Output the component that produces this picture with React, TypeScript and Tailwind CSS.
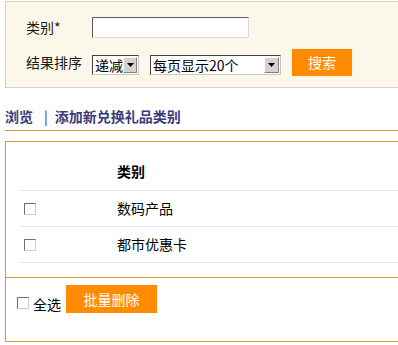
import React from 'react';

const FONT = "font-['Noto_Sans_CJK_SC','Noto_Sans',sans-serif]";

function CheckBox({ className = '' }: { className?: string }) {
  return (
    <span
      className={`block w-[12px] h-[12px] bg-white border border-t-[#6f6f6f] border-l-[#6f6f6f] border-b-[#cfcfcf] border-r-[#cfcfcf] ${className}`}
    />
  );
}

function FakeSelect({ width, value }: { width: string; value: string }) {
  return (
    <div
      className={`${width} h-[20px] flex items-center bg-white border border-t-[#404040] border-l-[#404040] border-b-[#c8c8c8] border-r-[#c8c8c8]`}
    >
      <span className="flex-1 pl-[2px] text-[14px] leading-[18px] text-black whitespace-nowrap">{value}</span>
      <span className="w-[15px] h-[16px] mr-px bg-[#d6d3ce] border border-t-white border-l-white border-b-[#808080] border-r-[#808080] flex items-center justify-center">
        <svg width="7" height="4" viewBox="0 0 7 4">
          <polygon points="0,0 7,0 3.5,4" fill="#000" />
        </svg>
      </span>
    </div>
  );
}

export default function App() {
  const rows = ['数码产品', '都市优惠卡'];
  return (
    <div className={`w-[398px] h-[345px] overflow-hidden bg-white ${FONT} text-[14px] text-[#1a1a1a]`}>
      <div className="pl-[5px] pt-px w-[520px]">
        {/* search panel */}
        <div className="bg-[#fcf8e9] border border-[#d2d2d2] pt-[15px] pb-[11px]">
          <div className="flex items-center h-[21px]">
            <span className="w-[86px] pl-[20px] leading-[21px]">类别*</span>
            <div className="w-[157px] h-[21px] bg-white border border-t-[#5a5a5a] border-l-[#5a5a5a] border-b-[#d8d8d8] border-r-[#d8d8d8]" />
          </div>
          <div className="flex items-start mt-[11px] h-[27px]">
            <span className="w-[86px] pl-[20px] leading-[27px]">结果排序</span>
            <div className="mt-[6px] flex gap-[11px]">
              <FakeSelect width="w-[47px]" value="递减" />
              <FakeSelect width="w-[131px]" value="每页显示20个" />
            </div>
            <button className="ml-[11px] w-[60px] h-[27px] bg-[#ff8b00] text-white text-[14px] leading-[27px]">
              搜索
            </button>
          </div>
        </div>

        {/* links */}
        <div className="pt-[18px] pb-[4px] border-b border-[#d6992f] flex items-center leading-[20px] text-[#3b3b7b] font-bold">
          <span>浏览</span>
          <span className="ml-[11px] font-normal text-[#333]">|</span>
          <span className="ml-[7px]">添加新兑换礼品类别</span>
        </div>

        {/* list box */}
        <div className="mt-[10px] border border-r-0 border-[#d6992f]">
          <div className="pl-[14px] pt-[11px]">
            <div className="flex items-center h-[38px] border-b border-[#e8e8e8]">
              <span className="w-[97px]" />
              <span className="font-bold text-black">类别</span>
            </div>
            {rows.map((r) => (
              <div key={r} className="flex items-center h-[36px] border-b border-[#e8e8e8]">
                <span className="w-[97px] pl-[4px]">
                  <CheckBox />
                </span>
                <span className="text-black">{r}</span>
              </div>
            ))}
          </div>
          <div className="mt-[14px] border-t border-[#d6992f] pt-[7px] pb-[27px] pl-[11px] flex items-start">
            <CheckBox className="mt-[12px]" />
            <span className="ml-[4px] mt-[9px] leading-[20px] text-black">全选</span>
            <button className="ml-[5px] w-[91px] h-[28px] bg-[#ff8b00] text-white text-[14px] leading-[28px]">
              批量删除
            </button>
          </div>
        </div>
      </div>
    </div>
  );
}
